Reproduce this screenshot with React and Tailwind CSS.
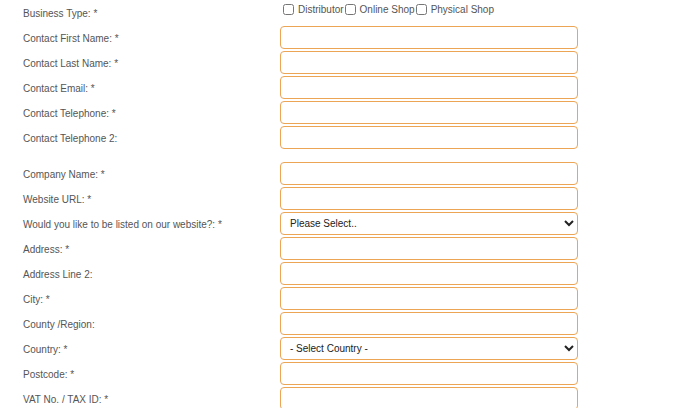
import React from "react";

const font = { fontFamily: '"Liberation Sans", Arial, sans-serif' };

function Row({ label, children }) {
  return (
    <div className="flex items-center h-[23px]">
      <div className="w-[257px] text-[10px] text-[#555] pt-[2px]">{label}</div>
      {children}
    </div>
  );
}

function Input() {
  return (
    <input
      type="text"
      className="w-[298px] h-[23px] rounded-[4px] border border-[#eba554] bg-white outline-none"
    />
  );
}

function Select({ text }) {
  return (
    <select className="w-[298px] h-[23px] rounded-[4px] border border-[#eba554] bg-white pl-[5px] text-[10px] text-[#222] outline-none">
      <option>{text}</option>
    </select>
  );
}

export default function App() {
  return (
    <div className="bg-white w-[700px] h-[408px] overflow-hidden pl-[23px]" style={font}>
      <div className="flex h-[26px]">
        <div className="w-[257px] text-[10px] text-[#555] pt-[6px]">Business Type: *</div>
        <div className="flex items-start pt-[2px] text-[10px] text-[#555]">
          <label className="flex items-center">
            <input type="checkbox" className="m-0 ml-[3px] mr-[4px] w-[11px] h-[11px]" />
            <span>Distributor</span>
          </label>
          <label className="flex items-center">
            <input type="checkbox" className="m-0 ml-[1px] mr-[4px] w-[11px] h-[11px]" />
            <span>Online Shop</span>
          </label>
          <label className="flex items-center">
            <input type="checkbox" className="m-0 ml-[1px] mr-[4px] w-[11px] h-[11px]" />
            <span>Physical Shop</span>
          </label>
        </div>
      </div>
      <div className="flex flex-col gap-[2px]">
        <Row label="Contact First Name: *"><Input /></Row>
        <Row label="Contact Last Name: *"><Input /></Row>
        <Row label="Contact Email: *"><Input /></Row>
        <Row label="Contact Telephone: *"><Input /></Row>
        <Row label="Contact Telephone 2:"><Input /></Row>
      </div>
      <div className="flex flex-col gap-[2px] mt-[13px]">
        <Row label="Company Name: *"><Input /></Row>
        <Row label="Website URL: *"><Input /></Row>
        <Row label="Would you like to be listed on our website?: *"><Select text="Please Select.." /></Row>
        <Row label="Address: *"><Input /></Row>
        <Row label="Address Line 2:"><Input /></Row>
        <Row label="City: *"><Input /></Row>
        <Row label="County /Region:"><Input /></Row>
        <Row label="Country: *"><Select text="- Select Country -" /></Row>
        <Row label="Postcode: *"><Input /></Row>
        <Row label="VAT No. / TAX ID: *"><Input /></Row>
      </div>
    </div>
  );
}
